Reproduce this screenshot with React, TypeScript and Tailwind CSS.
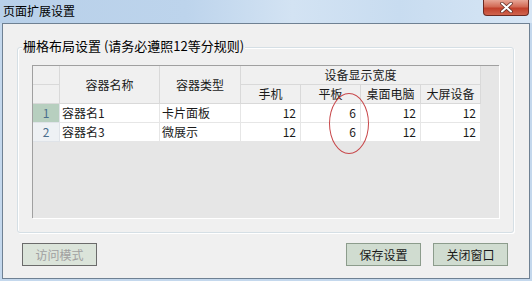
import React from "react";

const cols = "grid-cols-[27px_100px_81px_60px_60px_60px_60px]";

type Row = { id: number; name: string; type: string; widths: number[] };

const rows: Row[] = [
  { id: 1, name: "容器名1", type: "卡片面板", widths: [12, 6, 12, 12] },
  { id: 2, name: "容器名3", type: "微展示", widths: [12, 6, 12, 12] },
];

function CloseButton() {
  return (
    <div className="mr-[3px] flex h-[16px] w-[46px] items-center justify-center rounded-b-[4px] border border-t-0 border-[#6b2a22] bg-[linear-gradient(180deg,#e7a696_0%,#d26a55_45%,#c1402b_55%,#d0644e_100%)]">
      <svg width="13" height="11" viewBox="0 0 13 11">
        <path d="M2 1.5 L11 9.5 M11 1.5 L2 9.5" stroke="#5a2a22" strokeWidth="3.4" strokeLinecap="round" />
        <path d="M2 1.5 L11 9.5 M11 1.5 L2 9.5" stroke="#ffffff" strokeWidth="2" strokeLinecap="round" />
      </svg>
    </div>
  );
}

function HeadCell({ children, className = "" }: { children?: React.ReactNode; className?: string }) {
  return (
    <div className={`flex items-center justify-center border-b border-r border-[#d9d9d9] bg-[#f0f0f0] ${className}`}>
      {children}
    </div>
  );
}

export default function App() {
  return (
    <div className="flex h-[281px] w-[532px] flex-col bg-[#c4d8ed] font-['Noto_Sans_CJK_SC','Noto_Sans',sans-serif] text-[12px] text-[#1a1a1a]">
      {/* 标题栏 */}
      <div className="flex h-[23px] shrink-0 items-start justify-between bg-[linear-gradient(90deg,#b8d0e9_0%,#bdd4ec_35%,#d3e3f3_55%,#c8dcf0_75%,#d7e6f5_100%)]">
        <span className="pl-[3px] pt-[3px] text-[12px] leading-[16px] text-black">页面扩展设置</span>
        <CloseButton />
      </div>

      {/* 窗口主体 */}
      <div className="mx-[2px] mb-[2px] flex flex-1 flex-col border border-[#6f8193] bg-[#f0f0f0]">
        <div className="relative ml-[14px] mt-[23px] h-[186px] w-[497px] rounded-[3px] border border-[#d5dfe5] shadow-[inset_1px_1px_0_#ffffff,1px_1px_0_#ffffff]">
          <span className="absolute left-[4px] top-[-10px] bg-[#f0f0f0] px-[1px] text-[13px] leading-[16px] text-black">
            栅格布局设置 (请务必遵照12等分规则)
          </span>

          {/* 表格 */}
          <div className="relative ml-[14px] mt-[17px] h-[153px] w-[467px] border-l border-t border-[#a0a0a0] bg-[#e6e6e6] shadow-[1px_1px_0_#ffffff]">
            <div className={`grid ${cols} grid-rows-[19px_19px] text-[12px] leading-none`}>
              <HeadCell className="col-start-1 row-start-1" />
              <HeadCell className="col-start-1 row-start-2" />
              <HeadCell className="col-start-2 row-span-2 row-start-1">容器名称</HeadCell>
              <HeadCell className="col-start-3 row-span-2 row-start-1">容器类型</HeadCell>
              <HeadCell className="col-span-4 col-start-4 row-start-1">设备显示宽度</HeadCell>
              <HeadCell className="col-start-4 row-start-2">手机</HeadCell>
              <HeadCell className="col-start-5 row-start-2">平板</HeadCell>
              <HeadCell className="col-start-6 row-start-2">桌面电脑</HeadCell>
              <HeadCell className="col-start-7 row-start-2">大屏设备</HeadCell>
            </div>

            {rows.map((r) => (
              <div key={r.id} className={`grid ${cols} h-[19px] leading-none`}>
                <div
                  className={`flex items-center justify-center border-b border-r border-[#dfe3e8] text-[12px] text-[#4a6d8c] ${
                    r.id === 1 ? "bg-[#b7cfbf]" : "bg-[#eef1f4]"
                  }`}
                >
                  {r.id}
                </div>
                <div className="flex items-center border-b border-r border-[#e6e6e6] bg-white pl-[2px]">{r.name}</div>
                <div className="flex items-center border-b border-r border-[#e6e6e6] bg-white pl-[2px]">{r.type}</div>
                {r.widths.map((w, i) => (
                  <div key={i} className="flex items-center justify-end border-b border-r border-[#e6e6e6] bg-white pr-[4px]">
                    {w}
                  </div>
                ))}
              </div>
            ))}

            {/* 红色圈注 */}
            <div className="absolute left-[296px] top-[27px] h-[61px] w-[40px] rounded-[50%] border border-[#c8474a]" />
          </div>
        </div>

        {/* 按钮 */}
        <div className="mt-[10px] flex items-center pl-[19px] pr-[21px]">
          <button className="h-[23px] w-[75px] border border-[#6b6b6b] bg-[#dbe4da] text-[12px] text-[#a0a0a0]">
            访问模式
          </button>
          <div className="flex-1" />
          <button className="h-[23px] w-[75px] border border-[#8c9c8c] bg-[#d0dcd0] text-[12px] text-[#1a1a1a]">
            保存设置
          </button>
          <button className="ml-[12px] h-[23px] w-[75px] border border-[#8c9c8c] bg-[#d0dcd0] text-[12px] text-[#1a1a1a]">
            关闭窗口
          </button>
        </div>
      </div>
    </div>
  );
}
